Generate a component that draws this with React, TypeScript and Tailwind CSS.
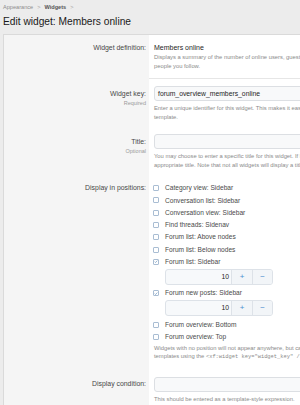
import React from "react";

const positions = [
  { label: "Category view: Sidebar" },
  { label: "Conversation list: Sidebar" },
  { label: "Conversation view: Sidebar" },
  { label: "Find threads: Sidenav" },
  { label: "Forum list: Above nodes" },
  { label: "Forum list: Below nodes" },
  { label: "Forum list: Sidebar", checked: true, order: 10 },
  { label: "Forum new posts: Sidebar", checked: true, order: 10 },
  { label: "Forum overview: Bottom" },
  { label: "Forum overview: Top" },
];

function Checkbox({ checked }: { checked?: boolean }) {
  return (
    <span className="ml-[-1px] mr-[6px] flex h-[6px] w-[6px] shrink-0 items-center justify-center rounded-[1px] border border-[#a9bdd3] bg-white">
      {checked && (
        <svg viewBox="0 0 6 6" className="h-[5px] w-[5px]">
          <path d="M1 3.2 L2.4 4.5 L5 1.6" fill="none" stroke="#5b86b3" strokeWidth="0.9" />
        </svg>
      )}
    </span>
  );
}

function OrderBox({ value }: { value: number }) {
  return (
    <div className="mb-[2px] ml-[11px] mt-[1px] flex h-[16px] w-[108px] overflow-hidden rounded-[3px] border border-[#dde2e8] bg-[#f7f9fb] text-[6.8px] leading-[14px]">
      <div className="flex-1 pr-[2px] text-right text-[#1e1e1e]">{value}</div>
      <div className="flex w-[21px] items-center justify-center border-l border-[#dde2e8] bg-[#f2f5f8] text-[8px] text-[#4b8fd0]">+</div>
      <div className="flex w-[20px] items-center justify-center border-l border-[#dde2e8] bg-[#f2f5f8] text-[8px] text-[#4b8fd0]">−</div>
    </div>
  );
}

function TextBox({ value }: { value?: string }) {
  return (
    <div className="h-[15px] w-[220px] rounded-[3px] border border-[#dcdfe3] bg-[#f8f9fa] pl-[3px] text-[6.8px] leading-[13px] text-[#1e1e1e]">
      {value}
    </div>
  );
}

function Help({ lines, className }: { lines: React.ReactNode[]; className: string }) {
  return (
    <div className={`text-[5.8px] text-[#8a8a8a] ${className}`}>
      {lines.map((l, i) => (
        <div key={i} className="whitespace-nowrap">
          {l}
        </div>
      ))}
    </div>
  );
}

export default function App() {
  return (
    <div className="h-[405px] w-[300px] overflow-hidden bg-[#ececec] font-['Liberation_Sans',Arial,sans-serif]">
      <div className="px-[3px] pt-[3px]">
        <div className="flex h-[8px] items-center gap-[4px] whitespace-nowrap text-[5.6px] leading-[8px] text-[#8c8c8c]">
          <span>Appearance</span>
          <span className="text-[#a5a5a5]">&gt;</span>
          <span className="font-bold text-[#555]">Widgets</span>
          <span className="text-[#a5a5a5]">&gt;</span>
        </div>
        <h1 className="mb-[5px] mt-[4px] whitespace-nowrap text-[10.2px] leading-[14px] text-[#1a1a1a]">
          Edit widget: Members online
        </h1>
      </div>

      <div className="ml-[3px] w-[420px] border border-[#dadada] bg-white text-[6.9px] text-[#474747]">
        {/* Widget definition */}
        <div className="flex">
          <div className="w-[145px] shrink-0 bg-[#f5f5f5] pr-[3px] pt-[8px] text-right leading-[10px]">Widget definition:</div>
          <div className="flex-1 border-b border-[#e6e6e6] pb-[7px] pl-[5px] pt-[8px]">
            <div className="text-[7px] leading-[10px] text-[#1e1e1e]">Members online</div>
            <Help
              className="leading-[9px]"
              lines={["Displays a summary of the number of online users, guests and members, as well as", "people you follow."]}
            />
          </div>
        </div>

        {/* Widget key */}
        <div className="flex">
          <div className="w-[145px] shrink-0 bg-[#f5f5f5] pr-[3px] pt-[9.5px] text-right">
            <div className="leading-[10px]">Widget key:</div>
            <div className="text-[5.5px] leading-[8px] text-[#9a9a9a]">Required</div>
          </div>
          <div className="flex-1 pb-[4px] pl-[5px] pt-[7px]">
            <TextBox value="forum_overview_members_online" />
            <Help
              className="mt-[3px] leading-[8.5px]"
              lines={["Enter a unique identifier for this widget. This makes it easier to include this widget in a", "template."]}
            />
          </div>
        </div>

        {/* Title */}
        <div className="flex">
          <div className="w-[145px] shrink-0 bg-[#f5f5f5] pr-[3px] pt-[11.5px] text-right">
            <div className="leading-[10px]">Title:</div>
            <div className="text-[5.5px] leading-[8px] text-[#9a9a9a]">Optional</div>
          </div>
          <div className="flex-1 pb-[4px] pl-[5px] pt-[9px]">
            <TextBox />
            <Help
              className="mt-[3px] leading-[8.5px]"
              lines={[
                "You may choose to enter a specific title for this widget. If left blank, the widget will use an",
                "appropriate title. Note that not all widgets will display a title.",
              ]}
            />
          </div>
        </div>

        {/* Display in positions */}
        <div className="flex">
          <div className="w-[145px] shrink-0 bg-[#f5f5f5] pr-[3px] pt-[10px] text-right leading-[10px]">Display in positions:</div>
          <div className="flex-1 pb-[8px] pl-[5px] pt-[9px]">
            {positions.map((p) => (
              <React.Fragment key={p.label}>
                <div className="flex h-[12.3px] items-center whitespace-nowrap text-[6.6px] text-[#4a4a4a]">
                  <Checkbox checked={p.checked} />
                  {p.label}
                </div>
                {p.order !== undefined && <OrderBox value={p.order} />}
              </React.Fragment>
            ))}
            <Help
              className="mt-[1px] leading-[8px]"
              lines={[
                "Widgets with no position will not appear anywhere, but can still be included in",
                <>
                  templates using the{" "}
                  <span className="font-['Liberation_Mono',monospace] text-[5.4px]">&lt;xf:widget key="widget_key" /&gt;</span>{" "}
                  tag.
                </>,
              ]}
            />
          </div>
        </div>

        {/* Display condition */}
        <div className="flex">
          <div className="w-[145px] shrink-0 bg-[#f5f5f5] pr-[3px] pt-[10px] text-right leading-[10px]">Display condition:</div>
          <div className="flex-1 pb-[8px] pl-[5px] pt-[8px]">
            <TextBox />
            <Help className="mt-[3px] leading-[8.5px]" lines={["This should be entered as a template-style expression."]} />
          </div>
        </div>
      </div>
    </div>
  );
}
